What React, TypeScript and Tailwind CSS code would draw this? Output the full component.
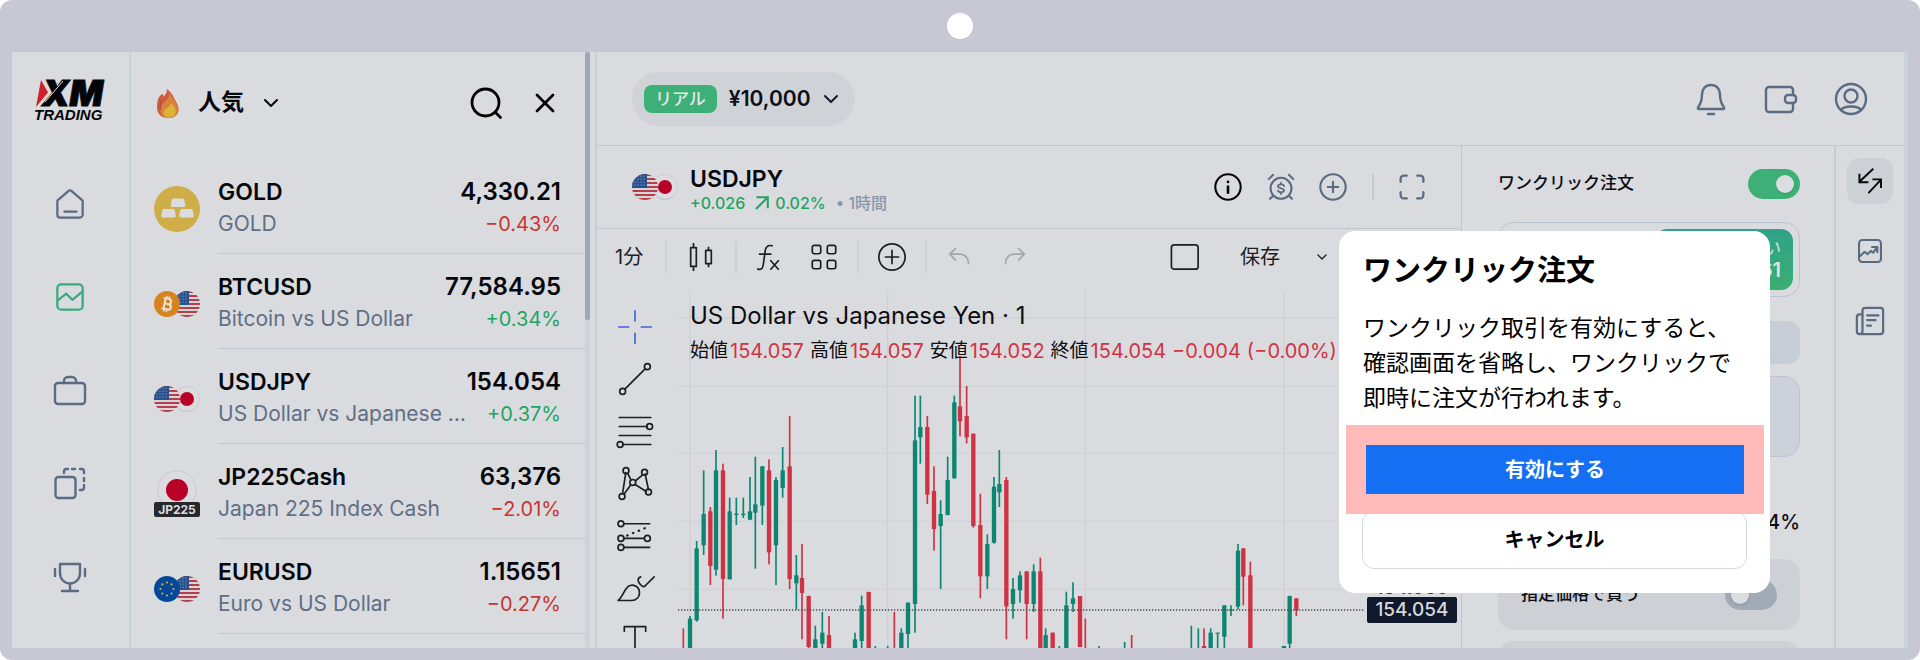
import { useId, useState, type ReactNode } from 'react';
import { ChevronDown, X } from 'lucide-react';

// ============================================================
// DATA
// ============================================================
type Market = {
  symbol: string;
  name: string;
  price: string;
  change: string;
  icon: ReactNode;
};

// x, high, low, body top, body bottom, 1 = up / 0 = down
const CANDLES: number[][] = [
  [280, 895, 960, 960, 960, 0],
  [300, 858, 960, 866, 960, 1],
  [320, 633, 875, 655, 871, 1],
  [341, 421, 675, 552, 646, 1],
  [361, 531, 765, 544, 708, 0],
  [378, 360, 737, 421, 719, 1],
  [399, 401, 866, 421, 747, 0],
  [419, 503, 748, 544, 748, 1],
  [439, 503, 585, 551, 555, 1],
  [460, 503, 564, 551, 555, 1],
  [480, 441, 570, 544, 569, 1],
  [496, 380, 716, 523, 548, 1],
  [517, 408, 585, 409, 527, 1],
  [537, 388, 703, 421, 667, 0],
  [558, 441, 765, 450, 646, 1],
  [578, 351, 503, 421, 474, 1],
  [599, 258, 777, 409, 747, 0],
  [619, 675, 838, 736, 760, 1],
  [636, 642, 928, 744, 789, 0],
  [656, 797, 960, 798, 951, 0],
  [676, 887, 960, 928, 960, 1],
  [697, 846, 960, 908, 941, 1],
  [717, 858, 960, 915, 960, 0],
  [795, 908, 960, 928, 960, 1],
  [815, 797, 960, 826, 933, 1],
  [836, 785, 960, 786, 960, 0],
  [856, 948, 960, 960, 960, 1],
  [893, 948, 960, 960, 960, 1],
  [913, 846, 960, 960, 960, 0],
  [934, 895, 960, 908, 960, 1],
  [954, 817, 960, 818, 912, 1],
  [975, 197, 908, 331, 822, 1],
  [991, 197, 401, 291, 322, 1],
  [1012, 258, 522, 291, 494, 0],
  [1032, 409, 662, 483, 597, 0],
  [1052, 511, 777, 552, 588, 1],
  [1073, 380, 556, 450, 555, 1],
  [1093, 197, 446, 217, 445, 1],
  [1110, 78, 319, 229, 274, 0],
  [1130, 168, 340, 258, 322, 0],
  [1150, 311, 593, 311, 588, 0],
  [1171, 491, 805, 585, 739, 0],
  [1192, 613, 777, 642, 739, 1],
  [1212, 441, 641, 470, 638, 1],
  [1228, 360, 531, 462, 487, 1],
  [1249, 441, 928, 450, 829, 0],
  [1269, 744, 866, 777, 822, 1],
  [1290, 724, 818, 736, 781, 1],
  [1310, 724, 928, 724, 822, 0],
  [1331, 703, 846, 724, 822, 1],
  [1351, 683, 960, 724, 960, 0],
  [1367, 895, 960, 915, 960, 1],
  [1388, 908, 960, 908, 960, 0],
  [1408, 948, 960, 960, 960, 1],
  [1429, 785, 960, 826, 960, 1],
  [1449, 757, 846, 805, 822, 1],
  [1470, 798, 951, 798, 951, 0],
  [1486, 866, 960, 960, 960, 0],
  [1527, 948, 960, 960, 960, 1],
  [1604, 936, 960, 960, 960, 1],
  [1625, 915, 960, 960, 960, 0],
  [1804, 887, 960, 960, 960, 1],
  [1825, 895, 960, 960, 960, 1],
  [1842, 895, 960, 948, 960, 0],
  [1862, 895, 960, 908, 960, 1],
  [1883, 908, 960, 908, 911, 1],
  [1903, 826, 960, 826, 920, 1],
  [1923, 826, 858, 838, 842, 1],
  [1944, 642, 838, 662, 830, 1],
  [1960, 654, 826, 655, 740, 0],
  [1981, 695, 960, 736, 960, 0],
  [2082, 948, 960, 948, 960, 1],
  [2099, 797, 960, 798, 941, 1],
  [2119, 805, 858, 805, 841, 0],
];

const GRID_X = [300, 893, 1486, 2082];
const GRID_Y = [-36, 169, 370, 574, 778];

// ============================================================
// COIN / FLAG ICONS
// ============================================================
function UsFlag() {
  const id = useId();
  return (
    <svg viewBox="0 0 26 26" className="size-[26px] shrink-0" aria-hidden="true">
      <clipPath id={id}>
        <circle cx="13" cy="13" r="13" />
      </clipPath>
      <g clipPath={`url(#${id})`}>
        <rect width="26" height="26" fill="#d6d6da" />
        {[0, 4, 8, 12, 16, 20, 24].map((y) => (
          <rect key={y} y={y} width="26" height="2" fill="#b5404c" />
        ))}
        <rect width="15" height="14" fill="#27508c" />
        {[2, 5, 8, 11].map((y) =>
          [3, 6, 9, 12].map((x) => <circle key={`${x}-${y}`} cx={x} cy={y} r="0.6" fill="#b8c4d8" />),
        )}
      </g>
    </svg>
  );
}

function JpFlag() {
  return (
    <svg viewBox="0 0 26 26" className="size-[26px] shrink-0" aria-hidden="true">
      <circle cx="13" cy="13" r="12.5" fill="#dcdce0" stroke="#cbccd1" />
      <path d="M2.500 20a12.500 12.500 0 0 0 21 0 14 14 0 0 1-21 0z" fill="#c2c3c8" />
      <circle cx="13" cy="13" r="7" fill="#b90027" />
    </svg>
  );
}

function EuFlag() {
  const stars = Array.from({ length: 8 }, (_, i) => (i * Math.PI) / 4);
  return (
    <svg viewBox="0 0 26 26" className="size-[26px] shrink-0" aria-hidden="true">
      <circle cx="13" cy="13" r="13" fill="#03489b" />
      {stars.map((a) => (
        <circle key={a} cx={13 + Math.cos(a) * 6.5} cy={13 + Math.sin(a) * 6.5} r="1.1" fill="#d6b036" />
      ))}
    </svg>
  );
}

function BtcCoin() {
  return (
    <svg viewBox="0 0 26 26" className="size-[26px] shrink-0" aria-hidden="true">
      <circle cx="13" cy="13" r="13" fill="#d9831f" />
      <g transform="rotate(12 13 13)" fill="none" stroke="#e8e4e0" strokeWidth="2">
        <path d="M10.500 7.500v11M8.500 7.700h5.500a2.500 2.500 0 0 1 0 5.200h-3.500M14 12.900h.8a2.700 2.700 0 0 1 0 5.400H8.500" />
        <path d="M11.300 5v2.500M14 5v2.500M11.300 18.500V21M14 18.500V21" strokeWidth="1.500" />
      </g>
    </svg>
  );
}

function GoldCoin() {
  return (
    <svg viewBox="0 0 46 46" className="size-[46px]" aria-hidden="true">
      <circle cx="23" cy="23" r="23" fill="#cfae47" />
      <g fill="#dcdcde">
        <path d="M19.500 12.500h9q1.500 0 1.800 1.500l1 5q.3 2-1.500 2H18.200q-1.800 0-1.500-2l1-5q.3-1.500 1.800-1.500z" />
        <path d="M10 23h9q1.500 0 1.800 1.500l1 5q.3 2-1.500 2H8.700q-1.800 0-1.500-2l1-5Q8.500 23 10 23z" />
        <path d="M28 23h9q1.500 0 1.800 1.500l1 5q.3 2-1.500 2H26.700q-1.800 0-1.500-2l1-5Q26.500 23 28 23z" />
      </g>
    </svg>
  );
}

function Pair({ front, back }: { front: ReactNode; back: ReactNode }) {
  return (
    <span className="flex w-[46px] shrink-0 flex-row-reverse justify-end">
      <span className="-ml-[6px]">{back}</span>
      <span className="z-10">{front}</span>
    </span>
  );
}

function Jp225() {
  return (
    <span className="flex flex-col items-center">
      <svg viewBox="0 0 40 32" className="h-8 w-10" aria-hidden="true">
        <circle cx="20" cy="20" r="19" fill="#dcdce0" stroke="#cfcfd4" strokeWidth="1.500" />
        <circle cx="20" cy="20" r="11" fill="#b90027" />
      </svg>
      <span className="w-[46px] rounded-xs bg-[#26282b] text-center text-[12px] leading-[15px] font-bold text-[#dcdce0]">
        JP225
      </span>
    </span>
  );
}

const MARKETS: Market[] = [
  { symbol: 'GOLD', name: 'GOLD', price: '4,330.21', change: '−0.43%', icon: <GoldCoin /> },
  {
    symbol: 'BTCUSD',
    name: 'Bitcoin vs US Dollar',
    price: '77,584.95',
    change: '+0.34%',
    icon: <Pair front={<BtcCoin />} back={<UsFlag />} />,
  },
  {
    symbol: 'USDJPY',
    name: 'US Dollar vs Japanese …',
    price: '154.054',
    change: '+0.37%',
    icon: <Pair front={<UsFlag />} back={<JpFlag />} />,
  },
  { symbol: 'JP225Cash', name: 'Japan 225 Index Cash', price: '63,376', change: '−2.01%', icon: <Jp225 /> },
  {
    symbol: 'EURUSD',
    name: 'Euro vs US Dollar',
    price: '1.15651',
    change: '−0.27%',
    icon: <Pair front={<EuFlag />} back={<UsFlag />} />,
  },
];

// ============================================================
// LINE ICONS
// ============================================================
function Line({
  size = 'size-8',
  width = 2.4,
  children,
}: {
  size?: string;
  width?: number;
  children: ReactNode;
}) {
  return (
    <svg
      viewBox="0 0 32 32"
      className={`overflow-visible ${size}`}
      fill="none"
      stroke="currentColor"
      strokeWidth={width}
      strokeLinecap="round"
      strokeLinejoin="round"
      aria-hidden="true"
    >
      {children}
    </svg>
  );
}

function IconButton({ label, className = '', children }: { label: string; className?: string; children: ReactNode }) {
  return (
    <button type="button" aria-label={label} className={`flex shrink-0 items-center justify-center ${className}`}>
      {children}
    </button>
  );
}

// ============================================================
// LEFT NAVIGATION
// ============================================================
function Logo() {
  return (
    <svg viewBox="0 0 74 44" className="h-11 w-[74px] overflow-visible" role="img" aria-label="XM Trading">
      <path d="M7 2l7 12.500L2 29z" fill="#cf1f2b" />
      <text
        x="8"
        y="28"
        fontFamily="Inter, sans-serif"
        fontWeight="900"
        fontStyle="italic"
        fontSize="35"
        fill="#040508"
        stroke="#040508"
        strokeWidth="1"
      >
        XM
      </text>
      <path d="M11 24L29 3" stroke="#dadbdf" strokeWidth="1" />
      <text
        x="0"
        y="42"
        fontFamily="Liberation Sans, sans-serif"
        fontWeight="700"
        fontStyle="italic"
        fontSize="15"
        fill="#040508"
      >
        TRADING
      </text>
    </svg>
  );
}

function SideNav() {
  return (
    <nav className="flex w-[119px] shrink-0 flex-col items-center border-r-2 border-[#c9cfd8] pt-[26px] text-[#5a6b82]">
      <Logo />
      <div className="mt-[60px] mr-0.5 flex flex-col gap-[49px]">
        <IconButton label="ホーム" className="size-11">
          <Line size="size-[30px]">
            <path d="M2.500 12.500L14.200 2.200a2.500 2.500 0 0 1 3.600 0L29.500 12.500V27.500a3 3 0 0 1-3 3h-21a3 3 0 0 1-3-3zM10 24h13" />
          </Line>
        </IconButton>
        <IconButton label="マーケット" className="size-11 text-[#36ab7e]">
          <Line size="size-[30px]">
            <rect x="2.500" y="2.500" width="27" height="27" rx="4" />
            <path d="M3 19.500l9-7 6.500 6.500 11-9" />
          </Line>
        </IconButton>
        <IconButton label="ポジション" className="size-11">
          <Line>
            <rect x="1" y="9" width="30" height="21" rx="3" />
            <path d="M10 9V7a4 4 0 0 1 4-4h4a4 4 0 0 1 4 4v2" />
          </Line>
        </IconButton>
        <IconButton label="コピー取引" className="size-11">
          <Line>
            <rect x="1.500" y="10" width="20" height="21" rx="3" />
            <path d="M10 6V4.500A2.500 2.500 0 0 1 12.500 2H14M18 2h3M26 2h1.500A2.500 2.500 0 0 1 30 4.500V6M30 11v3M30 18v2.500a2.500 2.500 0 0 1-2.500 2.500H26" />
          </Line>
        </IconButton>
        <IconButton label="コンペ" className="size-11">
          <Line>
            <path d="M6 4h20v9c0 6-4.500 10.500-10 10.500S6 19 6 13zM16 23.500V30M8 31h16M1 9v7M31 9v7" />
          </Line>
        </IconButton>
      </div>
    </nav>
  );
}

// ============================================================
// MARKET LIST
// ============================================================
function MarketRow({ market }: { market: Market }) {
  const down = market.change.startsWith('−');
  return (
    <li className="flex h-[95px] shrink-0 pl-[23px]">
      <div className="flex w-16 shrink-0 items-center pt-1">{market.icon}</div>
      <div className="flex min-w-0 flex-1 items-start border-b border-[#c0c9d2] pt-[17px] pr-6">
        <div className="min-w-0 flex-1">
          <p className="text-[23px] leading-8 font-semibold text-[#05070a]">{market.symbol}</p>
          <p className="text-[21px] leading-8 whitespace-nowrap text-[#5f6f86]">{market.name}</p>
        </div>
        <div className="shrink-0 text-right">
          <p className="text-[24px] leading-8 font-semibold text-[#05070a]">{market.price}</p>
          <p className={`text-[20px] leading-8 ${down ? 'text-[#c8352f]' : 'text-[#1fa463]'}`}>{market.change}</p>
        </div>
      </div>
    </li>
  );
}

function Flame() {
  return (
    <svg viewBox="0 0 22 30" className="h-[30px] w-[22px]" aria-hidden="true">
      <path d="M10 1c5 4 6 7 7.500 10 3 5 4.500 8 4 12-.6 4-4.500 7-10.500 7S0 26.500 0 19C0 12 2 7 6 6c0 1 .3 2 .8 2.500C9 6 10 4 10 1z" fill="#cf5a3e" />
      <path d="M12.500 5c2.500 5 8.500 11 8.500 17.500 0 4.500-4 7.500-9 7.500S3 27 3 21c0-5 9.500-8.500 9.500-16z" fill="#d9823c" />
      <path d="M14.500 15c3 4 4.500 6 4 9.500-.5 3-3 5-6.500 5s-5.500-2-5.500-5 5-4.500 8-9.500z" fill="#dcb236" />
      <path d="M4 12c-1 5-1 7 0 10" stroke="#b8433c" fill="none" />
    </svg>
  );
}

function MarketList() {
  return (
    <aside className="flex w-[466px] shrink-0 border-r-2 border-[#c9cfd8]">
      <div className="min-w-0 flex-1 overflow-hidden">
        <div className="flex h-[107px] items-center pr-6 pb-1.5 pl-[26px]">
          <Flame />
          <button type="button" className="ml-[19px] flex items-center gap-[15px] text-[23px] font-bold text-[#05070a]">
            人気
            <ChevronDown className="size-6" strokeWidth={2} />
          </button>
          <IconButton label="検索" className="ml-auto">
            <Line size="size-8" width={2.8}>
              <circle cx="15.500" cy="15.500" r="13.500" />
              <path d="M25.500 25.500l5 5" />
            </Line>
          </IconButton>
          <IconButton label="閉じる" className="ml-[27px]">
            <X className="size-8" strokeWidth={2} />
          </IconButton>
        </div>
        <ul>
          {MARKETS.map((m) => (
            <MarketRow key={m.symbol} market={m} />
          ))}
        </ul>
      </div>
      <div className="mr-[5px] w-[5px] bg-[#ccd3dc]">
        <div className="h-[268px] rounded-full bg-[#9da8b8]" />
      </div>
    </aside>
  );
}

// ============================================================
// TOP BAR
// ============================================================
function TopBar() {
  return (
    <header className="flex h-[94px] shrink-0 items-center border-b border-[#bcc7d0] pr-[37px] pl-[35px]">
      <button type="button" className="flex h-[54px] items-center rounded-full bg-[#cfd2d6] px-3">
        <span className="rounded-lg bg-[#3db078] px-[11px] text-[17px] leading-7 font-medium text-[#e4e6e8]">リアル</span>
        <span className="ml-3 text-[21px] font-semibold text-[#0c0f16]">¥10,000</span>
        <ChevronDown className="ml-2 size-6 text-[#15192a]" strokeWidth={2} />
      </button>
      <div className="ml-auto flex gap-[38px] text-[#5a6b82]">
        <IconButton label="通知">
          <Line>
            <path d="M16 2c-5.500 0-9 4-9 9.500C7 18 5.500 21 3.200 24c-.6.8-.4 2 .8 2h24c1.200 0 1.400-1.200.8-2C26.500 21 25 18 25 11.500 25 6 21.500 2 16 2zM13 31h6" />
          </Line>
        </IconButton>
        <IconButton label="ウォレット">
          <Line>
            <path d="M28 12V7a3 3 0 0 0-3-3H4a3 3 0 0 0-3 3v19a3 3 0 0 0 3 3h21a3 3 0 0 0 3-3v-5" />
            <rect x="20" y="12" width="11" height="8" rx="3" />
          </Line>
        </IconButton>
        <IconButton label="アカウント">
          <Line>
            <circle cx="16" cy="16" r="15" />
            <circle cx="16" cy="13" r="6.500" />
            <path d="M6 27c2-3 5.500-3.500 10-3.500s8 .5 10 3.500" />
          </Line>
        </IconButton>
      </div>
    </header>
  );
}

// ============================================================
// CHART
// ============================================================
function SymbolBar() {
  return (
    <div className="flex h-[83px] shrink-0 items-center border-b border-[#bcc7d0] pr-[35px] pl-[35px]">
      <Pair front={<UsFlag />} back={<JpFlag />} />
      <div className="ml-3 pt-1">
        <h1 className="text-[23px] leading-7 font-semibold text-[#05070a]">USDJPY</h1>
        <p className="flex items-center text-[16px] leading-5 font-medium text-[#1fa463]">
          +0.026
          <svg viewBox="0 0 14 14" className="mr-1.5 ml-2.5 size-[14px]" fill="none" stroke="currentColor" strokeWidth="2" aria-hidden="true">
            <path d="M1 13L12.500 1.500M1.500 1.200h11.300v11" />
          </svg>
          0.02%
          <span className="ml-2.5 text-[#8b97a8]">• 1時間</span>
        </p>
      </div>
      <div className="ml-auto flex items-center text-[#5a6b82]">
        <IconButton label="情報" className="text-[#05070a]">
          <Line size="size-7" width={2.4}>
            <circle cx="16" cy="16" r="14.500" />
            <path d="M16 15.500v7" strokeWidth="3" />
            <path d="M16 10v.2" strokeWidth="3" />
          </Line>
        </IconButton>
        <IconButton label="アラート" className="ml-[25px]">
          <Line size="size-7" width={2.4}>
            <circle cx="16" cy="17.500" r="12" />
            <path d="M2 7l5-5M30 7l-5-5M7 26l-3.500 3.500M25 26l3.500 3.500" />
            <path
              d="M19.500 15c-.3-1.500-1.500-2-3.500-2s-3.500.6-3.500 2.200c0 3 7 1.600 7 4.600 0 1.600-1.500 2.200-3.500 2.200s-3.200-.5-3.500-2M16 11v2M16 22v2"
              strokeWidth="2"
            />
          </Line>
        </IconButton>
        <IconButton label="追加" className="ml-[24px]">
          <Line size="size-7" width={2.4}>
            <circle cx="16" cy="16" r="14.500" />
            <path d="M16 10v12M10 16h12" />
          </Line>
        </IconButton>
        <span className="ml-[25px] h-[26px] w-0.5 bg-[#c3cad2]" />
        <IconButton label="全画面" className="ml-6">
          <Line size="size-7" width={2.6}>
            <path d="M3 10V6.500A3.500 3.500 0 0 1 6.500 3H10M22 3h3.500A3.500 3.500 0 0 1 29 6.500V10M29 22v3.500a3.500 3.500 0 0 1-3.500 3.500H22M10 29H6.500A3.500 3.500 0 0 1 3 25.500V22" />
          </Line>
        </IconButton>
      </div>
    </div>
  );
}

function Rule() {
  return <span className="h-8 w-0.5 shrink-0 bg-[#cccfd4]" />;
}

function ChartToolbar() {
  return (
    <div className="flex h-14 shrink-0 items-center pl-[18px] text-[#1d1f23]">
      <button type="button" className="w-8 shrink-0 text-left text-[20px] whitespace-nowrap">
        1分
      </button>
      <span className="w-[18px] shrink-0" />
      <Rule />
      <IconButton label="チャートタイプ" className="w-[68px]">
        <Line size="size-[30px]" width={1.8}>
          <path d="M5 6h6v20H5zM8 1v5M8 26v5M21 9h6v14h-6zM24 5v4M24 23v4" strokeLinecap="butt" />
        </Line>
      </IconButton>
      <Rule />
      <IconButton label="インジケーター" className="w-[62px]">
        <Line size="size-[30px]" width={1.8}>
          <path d="M5 29c4 1 5.500-1 6-5l2-14.500c.6-4.500 3-6.500 7.500-5.500M7 13h12M19 20l8 9M27 20l-8 9" />
        </Line>
      </IconButton>
      <IconButton label="レイアウト" className="mr-2 w-[50px]">
        <Line size="size-[30px]" width={1.8}>
          <rect x="3.500" y="3.500" width="9" height="9" rx="2" />
          <rect x="19.500" y="3.500" width="9" height="9" rx="2" />
          <rect x="3.500" y="19.500" width="9" height="9" rx="2" />
          <rect x="19.500" y="19.500" width="9" height="9" rx="2" />
        </Line>
      </IconButton>
      <Rule />
      <IconButton label="比較" className="w-[66px]">
        <Line size="size-[30px]" width={1.8}>
          <circle cx="16" cy="16" r="14" />
          <path d="M16 9v14M9 16h14" />
        </Line>
      </IconButton>
      <Rule />
      <IconButton label="元に戻す" className="ml-[18px] text-[#a4a6ab]">
        <Line size="size-[30px]" width={1.8}>
          <path d="M11 7l-6 6 6 6M5 13h11a9 9 0 0 1 9 9v1" />
        </Line>
      </IconButton>
      <IconButton label="やり直す" className="ml-6 text-[#a4a6ab]">
        <Line size="size-[30px]" width={1.8}>
          <path d="M21 7l6 6-6 6M27 13H16a9 9 0 0 0-9 9v1" />
        </Line>
      </IconButton>
      <div className="mr-[131px] ml-auto flex items-center">
        <IconButton label="レイアウト枠">
          <Line size="size-[30px]" width={1.8}>
            <rect x="1.500" y="3" width="28.500" height="26" rx="3" />
          </Line>
        </IconButton>
        <button type="button" className="ml-10 flex items-center gap-[34px] text-[20px] whitespace-nowrap">
          保存
          <ChevronDown className="size-4" strokeWidth={2} />
        </button>
      </div>
    </div>
  );
}

function DrawingTools() {
  return (
    <div className="flex w-[81px] shrink-0 flex-col items-center gap-4 pt-[24px] pr-1.5 text-[#1d1f23]">
      <IconButton label="カーソル" className="text-[#3c66dd]">
        <Line size="size-9" width={1.5}>
          <path d="M16 1v10M16 21v10M1 16h10M21 16h10" strokeLinecap="butt" />
        </Line>
      </IconButton>
      <IconButton label="トレンドライン">
        <Line size="size-9" width={1.5}>
          <circle cx="5" cy="27" r="2.600" />
          <circle cx="27" cy="5" r="2.600" />
          <path d="M7 25L25 7" />
        </Line>
      </IconButton>
      <IconButton label="フィボナッチ">
        <Line size="size-9" width={1.5}>
          <path d="M2 4h28M2 12h25M2 20h28M5 28h25" />
          <circle cx="29" cy="12" r="2.600" />
          <circle cx="2.800" cy="28" r="2.600" />
        </Line>
      </IconButton>
      <IconButton label="パターン">
        <Line size="size-9" width={1.5}>
          <path d="M5 25L7.800 7M6.500 25.500L12 18M9.500 7.500l3 6M16.500 14l6-5M16.500 17.500l9.500 6M25 8l3 14" />
          <circle cx="4.500" cy="28" r="2.600" />
          <circle cx="8" cy="5" r="2.600" />
          <circle cx="14" cy="15.500" r="2.600" />
          <circle cx="24.500" cy="6.500" r="2.600" />
          <circle cx="28" cy="24" r="2.600" />
        </Line>
      </IconButton>
      <IconButton label="予測ツール">
        <Line size="size-9" width={1.5}>
          <circle cx="3.500" cy="6" r="2.600" />
          <circle cx="3.500" cy="19" r="2.600" />
          <circle cx="27" cy="19" r="2.600" />
          <circle cx="3.500" cy="27" r="2.600" />
          <path d="M6 6h23M6 19h18M6 27h23" />
          <path d="M9 16.500l18-7.500" strokeDasharray="0.500 5" strokeWidth="2" />
        </Line>
      </IconButton>
      <IconButton label="ブラシ">
        <Line size="size-9" width={1.5}>
          <path d="M1 28c4-3 5-9 9-12.500 4-3 10 0 10 5.500 0 4-3 7-7 7zM21 7c-3 1-3 4 0 7s3.500 1.500 5 0L33 7" />
        </Line>
      </IconButton>
      <IconButton label="テキスト">
        <Line size="size-9" width={1.5}>
          <path d="M6.500 9V5h19v4M16 5v25M12 30h8" />
        </Line>
      </IconButton>
    </div>
  );
}

const OHLC = [
  ['始値', '154.057'],
  ['高値', '154.057'],
  ['安値', '154.052'],
  ['終値', '154.054'],
];

function Chart() {
  return (
    <div className="relative min-w-0 flex-1 overflow-hidden">
      <svg viewBox="0 0 2349 1089" className="mt-[3px] h-[363px] w-[783px]" role="img" aria-label="USDJPY 1分足チャート">
        <g transform="translate(-264 126)">
          {GRID_X.map((x) => (
            <path key={x} d={`M${x} -117V960`} stroke="#cdcfd4" strokeWidth="4" />
          ))}
          {GRID_Y.map((y) => (
            <path key={y} d={`M264 ${y}H2330`} stroke="#cfd1d5" strokeWidth="4" />
          ))}
          {CANDLES.map(([x, high, low, top, bottom, up]) => (
            <g key={x} fill={up ? '#0c8672' : '#cf3243'}>
              <rect x={x - 2.5} y={high} width="5" height={low - high} />
              <rect x={x - 6.5} y={top} width="13" height={bottom - top} />
            </g>
          ))}
          <path d="M264 840H2325" stroke="#4b4d53" strokeWidth="4" strokeDasharray="4 5" />
        </g>
      </svg>

      {/* Legend */}
      <div className="absolute top-4 left-3 whitespace-nowrap">
        <p className="text-[24px] leading-[30px] text-[#0b0d11]">US Dollar vs Japanese Yen · 1</p>
        <p className="mt-1.5 flex gap-1.5 text-[20px] leading-[28px] text-[#d23343]">
          {OHLC.map(([label, value]) => (
            <span key={label} className="flex gap-0.5">
              <span className="text-[19px] text-[#0b0d11]">{label}</span>
              {value}
            </span>
          ))}
          <span>−0.004</span>
          <span>(−0.00%)</span>
        </p>
      </div>

      {/* Price scale */}
      <div className="absolute top-[294px] right-1 w-[90px] text-center text-[19px] font-medium text-[#2b2d31]">
        <p className="leading-[18px]">154.060</p>
        <p className="rounded-xs bg-[#10182b] leading-[26px] text-[#d6d7dc]">154.054</p>
      </div>
    </div>
  );
}

// ============================================================
// ORDER PANEL
// ============================================================
function Toggle({ label, checked, onChange }: { label: string; checked: boolean; onChange: (v: boolean) => void }) {
  return (
    <label className="flex w-full items-center justify-between text-[17px] font-medium text-[#0b0d11]">
      {label}
      <input
        type="checkbox"
        role="switch"
        checked={checked}
        onChange={(e) => onChange(e.target.checked)}
        className="flex h-[30px] w-[52px] appearance-none items-center rounded-full bg-[#a1abb7] px-1.5 before:size-[18px] before:rounded-full before:bg-[#dcdde1] before:shadow-sm checked:justify-end checked:bg-[#3db078]"
      />
    </label>
  );
}

function OrderPanel() {
  const [oneClick, setOneClick] = useState(true);
  const [limit, setLimit] = useState(false);
  return (
    <section className="flex w-[373px] shrink-0 flex-col overflow-hidden border-l border-[#bcc7d0] pt-[23px] pr-[34px] pl-9">
      <Toggle label="ワンクリック注文" checked={oneClick} onChange={setOneClick} />
      <div className="mt-[23px] flex h-[75px] shrink-0 justify-end rounded-2xl border border-[#bcc4ce] p-1.5">
        <button
          type="button"
          className="flex w-[138px] flex-col items-end justify-center rounded-xl bg-linear-to-b from-[#2fa288] to-[#3aae72] pr-3 text-[#dfe3e4]"
        >
          <span className="text-[17px] leading-5">買い</span>
          <span className="text-[20px] leading-6 font-semibold">154.061</span>
        </button>
      </div>
      <div className="mt-6 h-[43px] shrink-0 rounded-xl bg-[#c7ced8]" />
      <div className="mt-3 h-[81px] shrink-0 rounded-2xl border border-[#bac5d1] bg-[#cdd1d9]" />
      <p className="mt-[51px] text-right text-[20px] leading-7 font-medium text-[#0b0d11]">4%</p>
      <div className="mt-[23px] flex h-[71px] shrink-0 items-center rounded-2xl bg-[#cdd0d4] px-[23px]">
        <Toggle label="指定価格で買う" checked={limit} onChange={setLimit} />
      </div>
      <div className="mt-[11px] h-[71px] shrink-0 rounded-2xl bg-[#cdd0d4]" />
    </section>
  );
}

function RightRail() {
  return (
    <nav className="flex w-[70px] shrink-0 flex-col items-center gap-6 border-l-2 border-[#c5ccd4] pt-3 text-[#5a6b82]">
      <IconButton label="取引" className="size-[46px] rounded-xl bg-[#cdd1d6] text-[#05070a]">
        <Line size="size-[26px]" width={2.4}>
          <path d="M20 1L3 17M3 7v10.500h11M14 31l15-16M19 14h10.500v10.500" strokeLinecap="butt" strokeLinejoin="miter" />
        </Line>
      </IconButton>
      <IconButton label="分析" className="size-[46px]">
        <Line size="size-[26px]" width={2.6}>
          <rect x="2.500" y="2.500" width="27" height="27" rx="4" />
          <path d="M4 22l5.500-5 3.500 3L17 16l3 2 5-7M18.500 11H25v6.500" />
        </Line>
      </IconButton>
      <IconButton label="ニュース" className="size-[46px]">
        <Line size="size-[30px]">
          <path d="M8 27V5a3 3 0 0 1 3-3h16a3 3 0 0 1 3 3v22a3 3 0 0 1-3 3H5a3 3 0 0 1-3-3V12a3 3 0 0 1 3-3h3M8 27a3 3 0 0 1-3 3M13 10h12M13 15h9M13 21h4" />
        </Line>
      </IconButton>
    </nav>
  );
}

// ============================================================
// CONFIRM DIALOG
// ============================================================
function OneClickDialog() {
  return (
    <div
      role="dialog"
      aria-labelledby="one-click-title"
      className="absolute top-[231px] right-[150px] z-20 w-[431px] rounded-2xl bg-white pb-6 text-black"
    >
      <h2 id="one-click-title" className="px-6 pt-5 text-[29px] leading-10 font-bold">
        ワンクリック注文
      </h2>
      <p className="px-6 pt-[20px] text-[23px] leading-[35px] whitespace-nowrap">
        ワンクリック取引を有効にすると、
        <br />
        確認画面を省略し、ワンクリックで
        <br />
        即時に注文が行われます。
      </p>
      <div className="relative mr-[6px] ml-[7px] mt-[9px] bg-[#ffbaba] px-5 py-5">
        <button type="button" className="h-[49px] w-full bg-[#146ff2] text-[20px] font-bold text-white">
          有効にする
        </button>
      </div>
      <div className="-mt-[3px] px-[23px]">
        <button
          type="button"
          className="h-[58px] w-full rounded-xl border border-[#cfdbe8] text-[20px] font-bold"
        >
          キャンセル
        </button>
      </div>
    </div>
  );
}

// ============================================================
// PAGE
// ============================================================
export default function App() {
  return (
    <div className="h-screen bg-white font-['Inter','Noto_Sans_CJK_JP',sans-serif]">
      <div className="relative flex h-full flex-col overflow-hidden rounded-xl bg-[#c8c7d4] px-3 pb-3">
        <div className="flex h-[52px] shrink-0 items-center justify-center">
          <span className="size-[26px] rounded-full bg-white" />
        </div>

        <div className="flex min-h-0 flex-1 overflow-hidden border-r-4 border-[#cbd2d9] bg-[#dadbdf]">
          <SideNav />
          <MarketList />
          <main className="flex min-w-0 flex-1 flex-col">
            <TopBar />
            <div className="flex min-h-0 flex-1">
              <div className="flex min-w-0 flex-1 flex-col overflow-hidden">
                <SymbolBar />
                <ChartToolbar />
                <div className="flex min-h-0 flex-1 overflow-hidden">
                  <DrawingTools />
                  <Chart />
                </div>
              </div>
              <OrderPanel />
              <RightRail />
            </div>
          </main>
        </div>

        <OneClickDialog />
      </div>
    </div>
  );
}
